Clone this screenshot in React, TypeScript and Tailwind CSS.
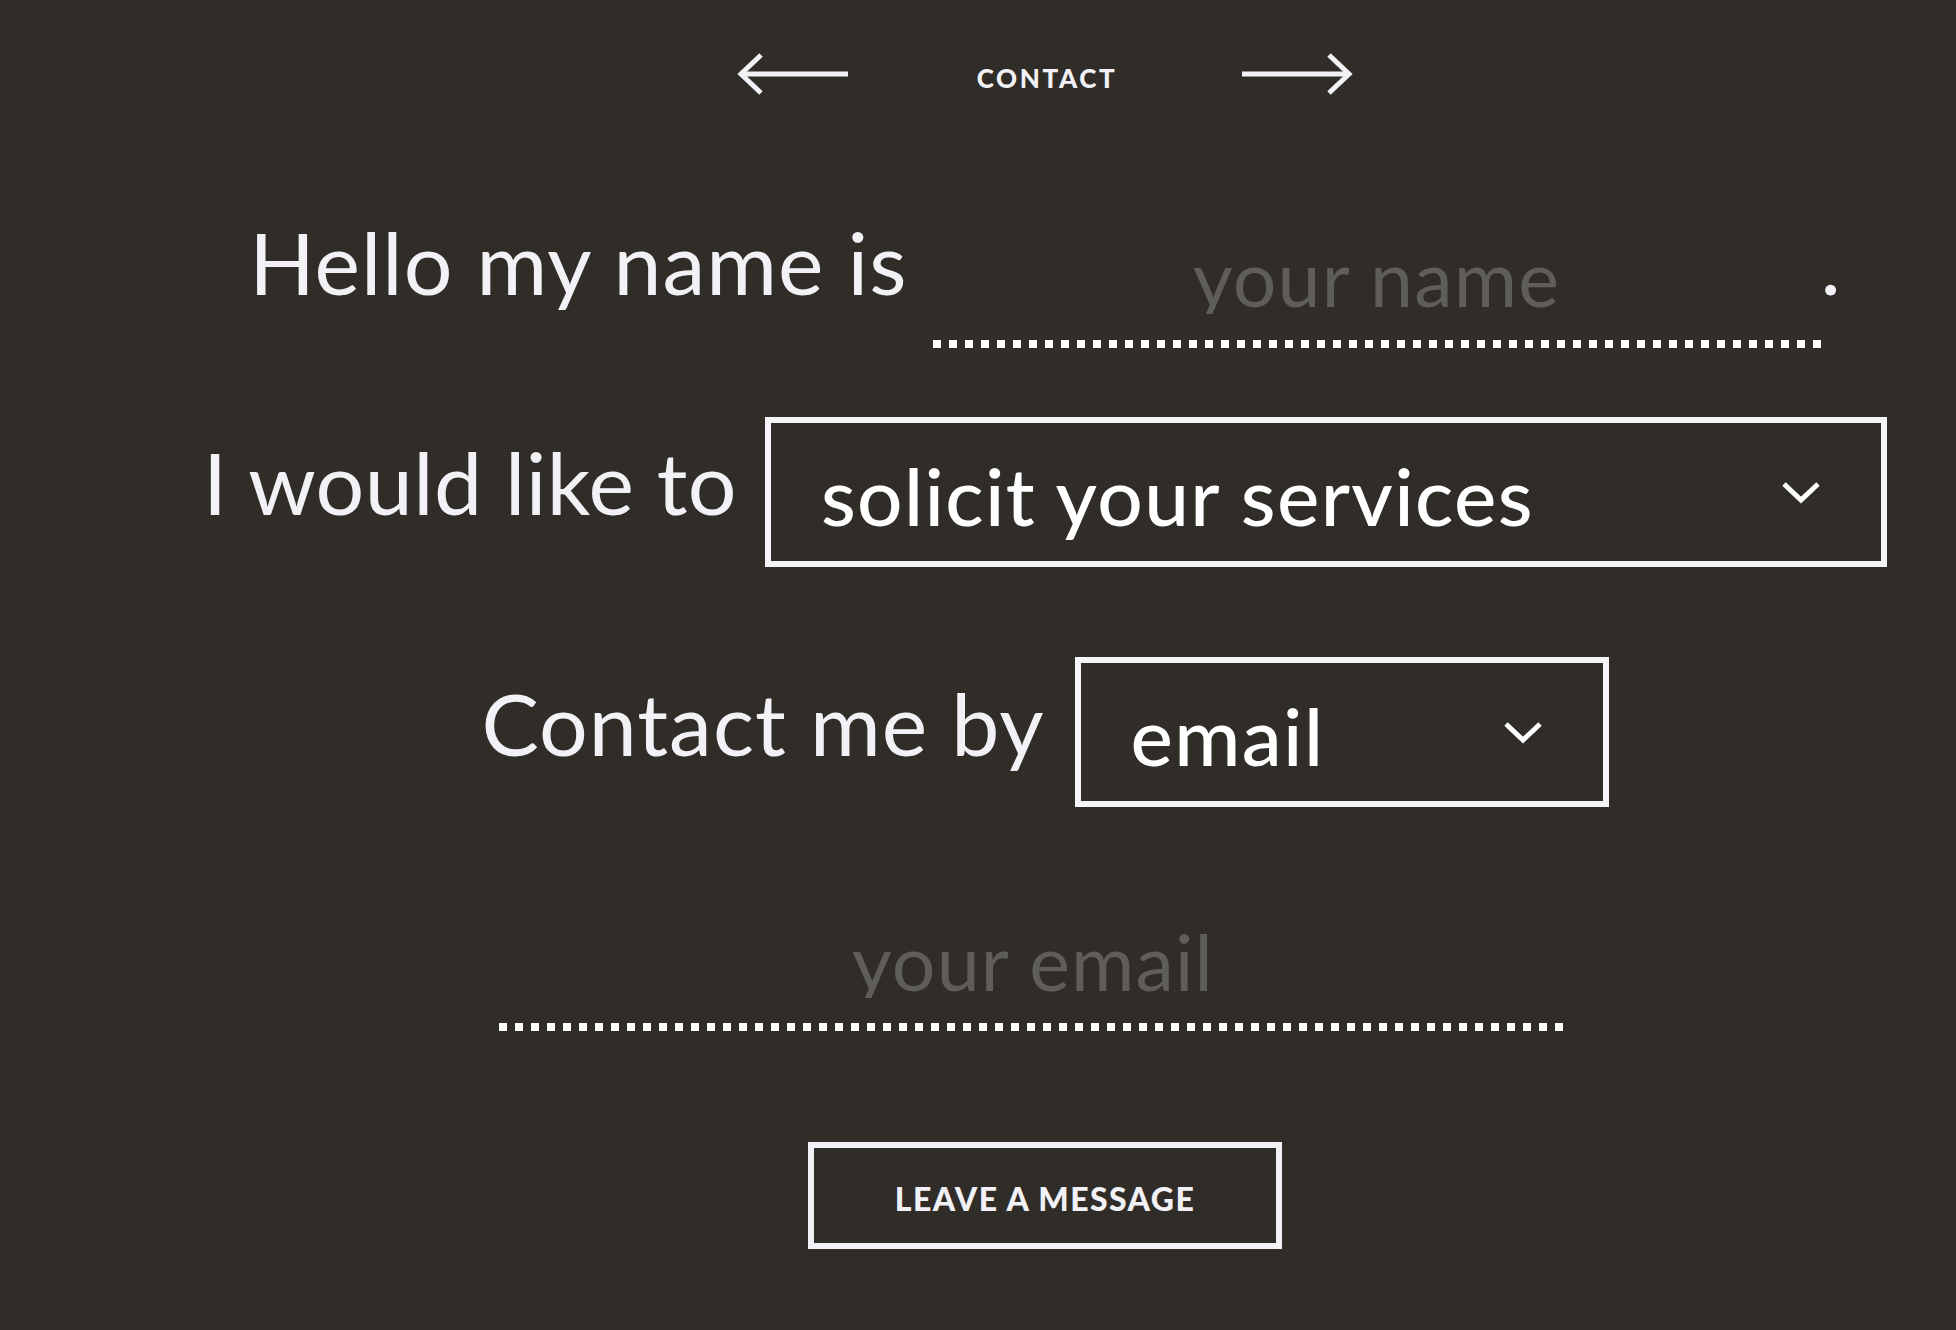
import React from "react";

const font = { fontFamily: "Lato, 'Open Sans', sans-serif" };

const ArrowLeft = () => (
  <svg width="112" height="42" viewBox="0 0 112 42" fill="none" stroke="#f2f1f6" strokeWidth="5">
    <line x1="4" y1="21" x2="111" y2="21" />
    <polyline points="24,2 4,21 24,40" strokeLinejoin="miter" />
  </svg>
);

const ArrowRight = () => (
  <svg width="112" height="42" viewBox="0 0 112 42" fill="none" stroke="#f2f1f6" strokeWidth="5">
    <line x1="1" y1="21" x2="108" y2="21" />
    <polyline points="88,2 108,21 88,40" strokeLinejoin="miter" />
  </svg>
);

const Chevron = () => (
  <svg width="40" height="24" viewBox="0 0 40 24" fill="none" stroke="#ffffff" strokeWidth="5">
    <polyline points="3,3 20,19 37,3" />
  </svg>
);

const Dots = ({ className }: { className: string }) => (
  <div
    className={`h-[8px] bg-[linear-gradient(to_right,#ffffff_8px,transparent_8px)] bg-[length:16px_8px] bg-repeat-x ${className}`}
  />
);

const FakeSelect = ({ value, width }: { value: string; width: string }) => (
  <div
    className={`flex h-[150px] items-start justify-between border-[6px] border-[#f5f4f8] pl-[50px] pr-[60px] ${width}`}
  >
    <span className="mt-[32px] text-[80px] font-medium leading-none tracking-[0.017em] text-white">
      {value}
    </span>
    <div className="mt-[58px]">
      <Chevron />
    </div>
  </div>
);

export default function App() {
  return (
    <div
      className="min-h-[1330px] w-full bg-[#302d28] text-[#f2f1f6]"
      style={font}
    >
      <div className="flex flex-col items-center pl-[134px]">
        {/* nav */}
        <div className="mt-[53px] flex items-start">
          <ArrowLeft />
          <span className="ml-[128px] mt-[12px] text-[26px] font-black leading-none tracking-[0.1em]">
            CONTACT
          </span>
          <div className="ml-[124px]">
            <ArrowRight />
          </div>
        </div>

        {/* name */}
        <div className="mt-[124px] flex items-start">
          <span className="text-[86px] leading-none tracking-[0.012em]">Hello my name is</span>
          <div className="ml-[25px] mt-[21px] flex w-[888px] flex-col">
            <input
              type="text"
              placeholder="your name"
              className="h-[74px] w-full border-0 bg-transparent p-0 text-center text-[77px] leading-none tracking-[0.015em] text-white outline-none placeholder:text-[#5f5d58]"
            />
            <Dots className="mt-[26px] w-full" />
          </div>
          <span className="text-[86px] leading-none">.</span>
        </div>

        {/* reason */}
        <div className="mt-[69px] flex items-start">
          <span className="mt-[22px] text-[86px] leading-none tracking-[0.005em]">
            I would like to
          </span>
          <div className="ml-[28px]">
            <FakeSelect value="solicit your services" width="w-[1122px]" />
          </div>
        </div>

        {/* contact method */}
        <div className="mt-[90px] flex items-start">
          <span className="mt-[23px] text-[86px] leading-none tracking-[0.012em]">
            Contact me by
          </span>
          <div className="ml-[30px]">
            <FakeSelect value="email" width="w-[534px]" />
          </div>
        </div>

        {/* email */}
        <div className="mt-[117px] box-content flex w-[1069px] flex-col pr-[24px]">
          <input
            type="email"
            placeholder="your email"
            className="h-[74px] w-full border-0 bg-transparent p-0 text-center text-[77px] leading-none tracking-[0.015em] text-white outline-none placeholder:text-[#5f5d58]"
          />
          <Dots className="mt-[25px] w-full" />
        </div>

        <button
          type="button"
          className="mt-[111px] flex h-[107px] w-[474px] items-start justify-center border-[6px] border-[#f2f1f6] pt-[35px]"
        >
          <span className="text-[32px] font-black leading-none tracking-[0.045em] text-[#f2f1f6]">
            LEAVE A MESSAGE
          </span>
        </button>
      </div>
    </div>
  );
}
